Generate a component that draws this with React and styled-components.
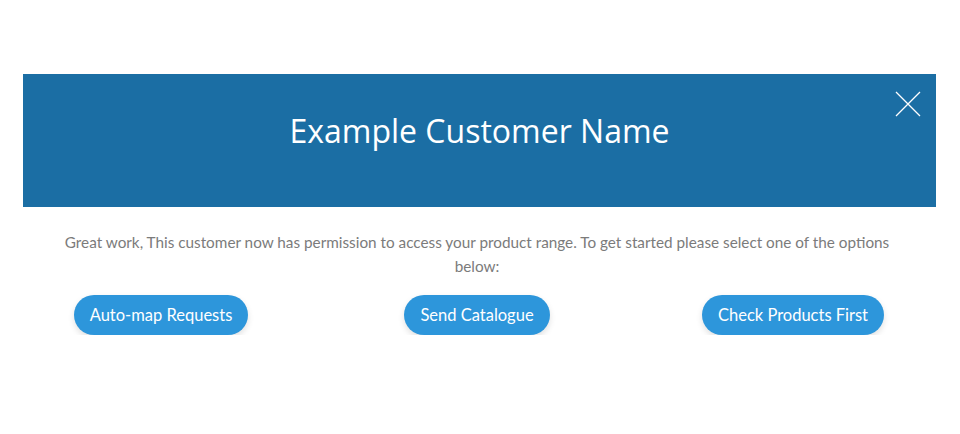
import React from 'react'
import styled, { createGlobalStyle } from 'styled-components'

const GlobalStyle = createGlobalStyle`
  body {
    margin: 0;
    background: #ffffff;
    font-family: 'Lato', 'Open Sans', sans-serif;
  }
`

const options = ['Auto-map Requests', 'Send Catalogue', 'Check Products First']

const CloseIcon = () => (
  <svg width='26' height='26' viewBox='0 0 26 26'>
    <path d='M1 1 L25 25 M25 1 L1 25' stroke='#ffffff' strokeWidth='1.3' fill='none' />
  </svg>
)

const App = () => {
  return (
    <Page>
      <GlobalStyle />
      <Modal>
        <Header>
          <Title>Example Customer Name</Title>
          <Close aria-label='close'>
            <CloseIcon />
          </Close>
        </Header>
        <Body>
          <Message>
            Great work, This customer now has permission to access your product
            range. To get started please select one of the options below:
          </Message>
          <Actions>
            {options.map((label) => (
              <Cell key={label}>
                <ActionButton>{label}</ActionButton>
              </Cell>
            ))}
          </Actions>
        </Body>
      </Modal>
    </Page>
  )
}

export default App

const Page = styled.main`
  padding: 74px 24px 0 23px;
`

const Modal = styled.section`
  display: flex;
  flex-direction: column;
`

const Header = styled.header`
  position: relative;
  height: 133px;
  box-sizing: border-box;
  padding-top: 37px;
  background: #1b6ea4;
  display: flex;
  justify-content: center;
  align-items: flex-start;
`

const Title = styled.h1`
  margin: 0;
  font-family: 'Open Sans', sans-serif;
  font-weight: 400;
  font-size: 32px;
  line-height: 40px;
  color: #ffffff;
`

const Close = styled.button`
  position: absolute;
  top: 17px;
  right: 15px;
  padding: 0;
  border: 0;
  background: none;
  cursor: pointer;
  display: flex;
`

const Body = styled.div`
  padding: 23px 0 0;
  display: flex;
  flex-direction: column;
  align-items: center;
`

const Message = styled.p`
  margin: 0 0 0 -5px;
  max-width: 850px;
  text-align: center;
  font-size: 15.3px;
  line-height: 24px;
  color: #7b7b7b;
`

const Actions = styled.div`
  margin: 17px 0 0 -5px;
  display: grid;
  grid-template-columns: repeat(3, 316px);
`

const Cell = styled.div`
  display: flex;
  justify-content: center;
`

const ActionButton = styled.button`
  height: 40px;
  padding: 0 16px;
  border: 0;
  border-radius: 20px;
  background: #2d96db;
  color: #ffffff;
  font-family: 'Lato', 'Open Sans', sans-serif;
  font-size: 16.5px;
  box-shadow: 0 3px 6px rgba(0, 0, 0, 0.12);
  cursor: pointer;
`
